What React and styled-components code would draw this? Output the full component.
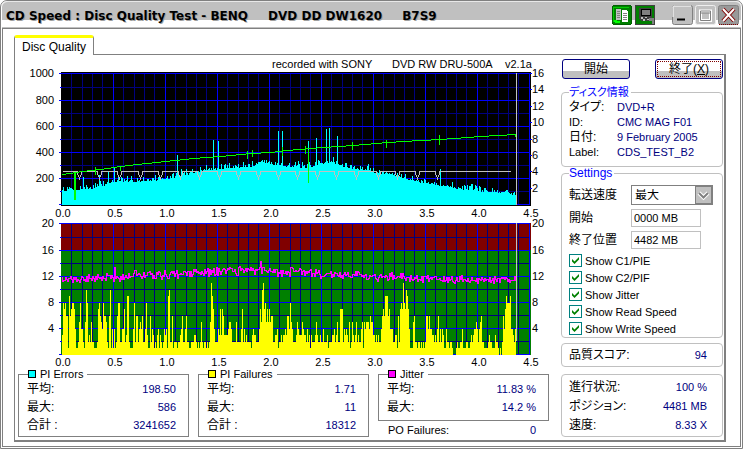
import React from "react";
import styled, { createGlobalStyle } from "styled-components";

const GlobalStyle = createGlobalStyle`
  * { box-sizing: border-box; }
  body {
    margin: 0;
    background: #fff;
    color: #000;
    font: 11px/12px "Liberation Sans", "Noto Sans CJK JP", sans-serif;
    font-feature-settings: "palt";
  }
  button, input, select { font: inherit; color: inherit; }
`;

const GRAY = "#808080";
const SILVER = "#c0c0c0";
const NAVY = "#000080";

const Window = styled.main`
  border: 1px solid ${GRAY};
  border-radius: 7px 7px 0 0;
  padding: 0 1px 1px;
  background: #fff;
`;

const TitleBar = styled.header`
  display: flex;
  align-items: center;
  height: 27px;
  padding: 1px 2px 0 4px;
  border-top: 1px solid #e8e8e8;
  border-bottom: 1px solid ${SILVER};
  border-radius: 6px 6px 0 0;
  background: linear-gradient(${SILVER} 18px, #fff 18px);
`;

const Title = styled.h1`
  display: flex;
  gap: 20px;
  flex: 1;
  margin: 0;
  padding-top: 2px;
  font: bold 12px/18px "DejaVu Sans", sans-serif;
  white-space: nowrap;
  text-shadow: 1px 1px #a0a0a0;
`;

const WindowButtons = styled.div`
  display: flex;
  gap: 2px;
`;

const ToolButtons = styled.div`
  display: flex;
  gap: 3px;
  margin-right: 17px;
`;

const IconButton = styled.button`
  display: block;
  width: ${(p) => (p.$tool ? 20 : 21)}px;
  height: 20px;
  padding: 0;
  border: 0;
  background: none;
  svg { display: block; }
`;

const Frame = styled.div`
  border: 1px solid ${GRAY};
  padding: 6px 14px 4px 11px;
`;

const Tab = styled.button`
  display: block;
  position: relative;
  height: 20px;
  margin-bottom: -1px;
  padding: 0 7px;
  border: 1px solid ${GRAY};
  border-top: 3px solid #ff0;
  border-bottom: 0;
  border-radius: 3px 3px 0 0;
  background: #fff;
  font-size: 12px;
`;

const Panel = styled.section`
  display: grid;
  grid-template-columns: minmax(0, 1fr) 163px;
  gap: 12px;
  padding: 1px 0 1px 3px;
  border: 1px solid ${GRAY};
  border-right-width: 2px;
  border-bottom-width: 2px;
`;

const Chart = styled.svg`
  display: block;
  width: 100%;
  height: auto;
  text { font-size: 11px; }
`;

const Stats = styled.div`
  display: grid;
  grid-template-columns: repeat(3, 1fr);
  align-items: start;
  gap: 9px;
`;

const StatBox = styled.fieldset`
  min-width: 0;
  margin: 0;
  padding: 0 12px ${(p) => p.$bottom}px 8px;
  border: 1px solid ${GRAY};
`;

const StatLegend = styled.legend`
  display: flex;
  align-items: center;
  gap: 4px;
  height: 12px;
  margin-left: 1px;
  padding: 0 4px 0 0;
`;

const Swatch = styled.span`
  width: 8px;
  height: 8px;
  border: 1px solid #000;
  background: ${(p) => p.$color};
`;

const Rows = styled.dl`
  margin: 0;
  padding: ${(p) => p.$pad || "0"};
`;

const Row = styled.div`
  display: flex;
  justify-content: space-between;
  align-items: center;
  height: ${(p) => p.$h || 18}px;
`;

const Label = styled.dt`
  font-size: ${(p) => (p.$latin ? 11 : 12)}px;
  white-space: nowrap;
`;

const Value = styled.dd`
  margin: 0;
  color: ${NAVY};
  white-space: nowrap;
`;

const InfoRow = styled(Row)`
  display: grid;
  grid-template-columns: 48px 1fr;
  height: 15px;
`;

const Side = styled.aside`
  display: flex;
  flex-direction: column;
  padding: 3px 1px 0 0;
`;

const Actions = styled.div`
  display: flex;
  justify-content: space-between;
  margin: 0 0 7px 1px;
`;

const PushButton = styled.button`
  width: 68px;
  height: 20px;
  padding: 0;
  border: 1px solid ${NAVY};
  border-radius: 3px;
  background: linear-gradient(#fff 11px, ${SILVER} 11px);
  font-size: 12px;
  outline: ${(p) => (p.$focused ? "1px dotted #800000" : "none")};
  outline-offset: -3px;
`;

const SideBox = styled.fieldset`
  min-width: 0;
  margin: 0;
  padding: 0 15px 0 7px;
  border: 1px solid ${SILVER};
  border-radius: 4px;
`;

const SideLegend = styled.legend`
  height: 12px;
  padding: 0 2px 0 0;
  font-size: ${(p) => (p.$latin ? 12 : 11)}px;
  color: #00f;
`;

const SummaryBox = styled.section`
  margin-top: ${(p) => p.$gap}px;
  padding: ${(p) => p.$pad}px 15px ${(p) => p.$pad}px 7px;
  border: 1px solid ${SILVER};
  border-radius: 4px;
`;

const Form = styled.div`
  display: grid;
  grid-template-columns: 62px 1fr;
  align-items: center;
  row-gap: 4px;
  margin: 6px -6px 3px 0;
`;

const FieldLabel = styled.label`
  font-size: 12px;
`;

const TextInput = styled.input`
  width: 70px;
  height: 18px;
  padding: 0 2px;
  border: 1px solid ${SILVER};
  background: #fff;
`;

const SelectWrap = styled.div`
  position: relative;
  height: 20px;
  svg {
    position: absolute;
    right: 1px;
    top: 1px;
    pointer-events: none;
  }
`;

const Select = styled.select`
  display: block;
  appearance: none;
  width: 100%;
  height: 20px;
  padding: 0 3px;
  border: 1px solid ${GRAY};
  border-radius: 0;
  background: #fff;
  font-size: 12px;
`;

const CheckRow = styled.label`
  display: flex;
  align-items: center;
  gap: 3px;
  height: 17px;
  white-space: nowrap;
`;

const Check = styled.input`
  appearance: none;
  width: 13px;
  height: 13px;
  margin: 0;
  border: 1px solid #008080;
  background: #fff;
  display: grid;
  place-content: center;
  &:checked::before {
    content: "";
    width: 7px;
    height: 7px;
    background: #008000;
    clip-path: polygon(0 28%, 36% 64%, 100% 0, 100% 36%, 36% 100%, 0 64%);
  }
`;

/* ---------- chart data, in plot pixels: one column per sample ---------- */

const LEFT = 43;
const PLOT_W = 470;
const SAMPLES = 454;

function random(seed) {
  let s = seed;
  return () => {
    s = (s * 1664525 + 1013904223) % 4294967296;
    return s / 4294967296;
  };
}

function at(points, x) {
  for (let i = 1; i < points.length; i++) {
    const [x0, y0] = points[i - 1];
    const [x1, y1] = points[i];
    if (x <= x1) return y0 + ((y1 - y0) * (x - x0)) / (x1 - x0);
  }
  return points[points.length - 1][1];
}

const PI_ENVELOPE = [
  [0, 108], [8, 115], [18, 122], [30, 128], [38, 145], [46, 165], [58, 185], [72, 180],
  [92, 192], [108, 207], [118, 230], [136, 250], [142, 272], [158, 275], [174, 292],
  [192, 298], [200, 335], [212, 310], [228, 298], [247, 282], [258, 320], [268, 330],
  [278, 305], [288, 285], [306, 268], [315, 248], [328, 240], [341, 213], [354, 182],
  [364, 168], [378, 153], [392, 128], [408, 120], [420, 108], [440, 100], [454, 80],
];
const PI_SPIKES = {
  21: 212, 37: 228, 46: 250, 52: 290, 115: 378, 119: 272, 151: 495, 156: 486, 216: 563,
  220: 563, 246: 486, 254: 510, 264: 578, 267: 586, 275: 525, 378: 272,
};
const SPEED = [
  [0, 119], [20, 116], [38, 114], [58, 111], [75, 109], [103, 106], [131, 103], [158, 101],
  [188, 98], [208, 97], [224, 95], [261, 92], [291, 90], [325, 87], [358, 85], [378, 84],
  [418, 81], [453, 79],
];
const SPEED_MARKS = [
  [12, 116, 28], [13, 116, 28], [33, 111, 8], [58, 110, 5], [185, 95, 8], [190, 94, 7],
  [220, 91, 9], [243, 90, 8], [246, 94, 33], [290, 86, 8], [324, 84, 8], [377, 79, 10], [453, 78, 3],
];
const NOTCHES = [
  17, 37, 57, 78, 98, 118, 137, 157, 176, 196, 216, 235, 255, 274, 294, 316, 335, 355, 375,
];

const PIF = (
  "38786619678874112584421" + "5a8232522111278654866521" + "6a14141268822447239921" +
  "1148266245462248311624312134132124341" + "9a226122212234622462211222332121252122121" +
  "25b9742224373763333455422225222247242322221343322247" + "5ab785757566223341223233436648" +
  "5422235433354332423132223532232242223122233423522777243432512532352322451545554" +
  "655332323224676999674442233162787b87a97411156221221212126646443323246242431142212" +
  "2100012112241112211232344542456221111232211132210102647988894432443"
).split("").map((c) => parseInt(c, 16));

const JITTER = [
  [0, 11.8], [20, 11.7], [40, 12.1], [58, 12.0], [70, 12.5], [98, 12.4], [125, 12.6],
  [158, 13.0], [180, 13], [198, 13.2], [224, 12.8], [235, 13.1], [260, 12.5], [285, 12.5],
  [305, 12.1], [335, 12], [360, 11.8], [386, 11.7], [420, 11.5], [435, 11.6], [440, 12.1], [453, 11.4],
];

const rndPi = random(7);
const piPath = Array.from({ length: SAMPLES }, (_, i) => {
  const v = PI_SPIKES[i] || at(PI_ENVELOPE, i) + rndPi() * rndPi() * 60 - 8;
  const h = Math.round(v * 0.131);
  return `M${LEFT + 1 + i} ${149 - h}h1v${h}h-1z`;
}).join("");

const pifPath = Array.from({ length: SAMPLES }, (_, i) => {
  const h = Math.round((PIF[i] ?? 2) * 6.5);
  return `M${LEFT + 1 + i} ${137 - h}h1v${h}h-1z`;
}).join("");

const rndJitter = random(21);
let previous = 59;
const jitterPath = Array.from({ length: SAMPLES }, (_, i) => {
  const peak = i === 52 ? 1.2 : i === 198 ? 1.1 : 0;
  const y = Math.round(137 - 6.5 * (at(JITTER, i) + peak + (rndJitter() + rndJitter() - 1) * 0.8));
  const top = Math.min(y, previous);
  const h = Math.abs(y - previous) + 1;
  previous = y;
  return `M${LEFT + 1 + i} ${top}h1v${h}h-1z`;
}).join("");

const speedPath = Array.from({ length: SAMPLES }, (_, i) =>
  `M${LEFT + 1 + i} ${Math.round(at(SPEED, i)) - 1}h1v1h-1z`
).join("") + SPEED_MARKS.map(([x, y, h]) => `M${LEFT + 1 + x} ${y}h1v${h}h-1z`).join("");

const writePath = "M45 115.5" + NOTCHES.map((n) => {
  const x = LEFT + 1 + n + 0.5;
  return `H${x - 2}V118L${x} 122.5L${x + 2} 118V115.5`;
}).join("") + "H493";

const X_LABELS = ["0.0", "0.5", "1.0", "1.5", "2.0", "2.5", "3.0", "3.5", "4.0", "4.5"];

function Grid({ top, bottom, rows }) {
  const vertical = [];
  for (let k = 1; k <= 45; k++) if (k % 5) vertical.push(Math.floor(LEFT + 10.4 * k + 0.3));
  return (
    <g>
      {vertical.map((x) => <rect key={x} x={x} y={top} width="1" height={bottom - top} fill={NAVY} />)}
      {rows.slice(1).map((y) => (
        <g key={y} fill={NAVY}>
          <rect x={LEFT} y={y - 13} width={PLOT_W - 2} height="1" />
          <rect x={LEFT - 1} y={y - 13} width="2" height="1" fill="#00f" />
        </g>
      ))}
      {X_LABELS.slice(1).map((l, i) => (
        <rect key={l} x={LEFT + 52 * (i + 1)} y={top} width="1" height={bottom - top} fill="#00f" />
      ))}
      {rows.map((y) => <rect key={y} x={LEFT - 2} y={y} width={PLOT_W} height="1" fill="#00f" />)}
    </g>
  );
}

function XAxis({ y }) {
  return X_LABELS.map((l, i) => (
    <text key={l} x={LEFT + 2 + 52 * i} y={y} textAnchor="middle">{l}</text>
  ));
}

function ErrorChart() {
  const rows = [17, 44, 70, 96, 122, 148];
  return (
    <Chart viewBox="0 0 531 162" role="img" aria-label="PI Errors" shapeRendering="crispEdges">
      <text x="254" y="12">recorded with SONY</text>
      <text x="374" y="12">DVD RW DRU-500A</text>
      <text x="487" y="12">v2.1a</text>
      <rect x={LEFT} y="16" width={PLOT_W} height="134" />
      <Grid top={17} bottom={149} rows={rows} />
      <path d={piPath} fill="#0ff" />
      <path d={writePath} fill="none" stroke={SILVER} />
      <path d={speedPath} fill="#0f0" />
      <rect x="498" y="17" width="1" height="132" fill={SILVER} />
      {["1000", "800", "600", "400", "200"].map((l, i) => (
        <text key={l} x="36" y={rows[i] + 4} textAnchor="end">{l}</text>
      ))}
      {[16, 14, 12, 10, 8, 6, 4, 2].map((l, i) => {
        const y = Math.round(17 + 16.4 * i);
        return (
          <g key={l}>
            <rect x="511" y={y} width="3" height="1" fill="#00f" />
            <text x="514" y={y + 4}>{l}</text>
          </g>
        );
      })}
      <XAxis y={161} />
    </Chart>
  );
}

function FailureChart() {
  const rows = [5, 32, 58, 84, 110, 136];
  const labels = ["20", "16", "12", "8", "4"];
  return (
    <Chart viewBox="0 0 531 150" role="img" aria-label="PI Failures / Jitter" shapeRendering="crispEdges">
      <rect x={LEFT} y="5" width={PLOT_W} height="27" fill="#800000" />
      <rect x={LEFT} y="32" width={PLOT_W} height="105" fill="#008000" />
      <Grid top={5} bottom={137} rows={rows} />
      <path d={pifPath} fill="#ff0" />
      <path d={jitterPath} fill="#f0f" />
      <rect x="498" y="5" width="1" height="118" fill={SILVER} />
      {labels.map((l, i) => (
        <g key={l}>
          <text x="36" y={rows[i] + 4} textAnchor="end">{l}</text>
          <text x="514" y={rows[i] + 4}>{l}</text>
        </g>
      ))}
      <XAxis y={148} />
    </Chart>
  );
}

function Stat({ title, color, rows, bottom = 2 }) {
  return (
    <StatBox $bottom={bottom}>
      <StatLegend><Swatch $color={color} />{title}</StatLegend>
      <Rows>
        {rows.map(([label, value]) => (
          <Row key={label}><Label>{label}</Label><Value>{value}</Value></Row>
        ))}
      </Rows>
    </StatBox>
  );
}

function TitleIcons() {
  return (
    <>
      <ToolButtons>
        <IconButton $tool aria-label="Copy">
          <svg width="20" height="20" shapeRendering="crispEdges">
            <rect x=".5" y=".5" width="19" height="19" rx="2" fill="#008000" stroke="#006000" />
            <path d="M1 17V2h16" fill="none" stroke="#0c0" />
            <path d="M2 15h3v1h3v2h-5z" fill="#0f0" />
            <path d="M4 4h5v11h-5z" fill={SILVER} />
            <path d="M10 5h4l2 2v10h-6z" fill="#fff" />
            <path d="M5 6h3M5 8h3M5 10h3M5 12h3M11 8h4M11 10h4M11 12h4M11 14h4" stroke={GRAY} />
          </svg>
        </IconButton>
        <IconButton $tool aria-label="Save">
          <svg width="20" height="20" shapeRendering="crispEdges">
            <rect x=".5" y=".5" width="19" height="19" fill="#008000" stroke="#404040" />
            <path d="M4 3h13v13H6l-2-2z" fill="#404040" />
            <path d="M6 4h9v6H6z" fill={GRAY} stroke="#000" />
            <path d="M6 12h2v2H6zM10 12h2v1h-2zM8 14h2v2H8zM12 14h2v1h-2z" fill={SILVER} />
            <path d="M14 13h5v6h-2v-3h-3z" fill={GRAY} />
          </svg>
        </IconButton>
      </ToolButtons>
      <WindowButtons>
        <IconButton aria-label="Minimize">
          <svg width="21" height="20">
            <rect x=".5" y=".5" width="20" height="19" rx="2" fill={SILVER} stroke={GRAY} />
            <path d="M1 12V2a1 1 0 0 1 1-1h17" fill="none" stroke="#fff" />
            <path d="M5 14.5h8" stroke="#000" strokeWidth="2" />
          </svg>
        </IconButton>
        <IconButton aria-label="Maximize">
          <svg width="21" height="20">
            <rect x=".5" y=".5" width="20" height="19" rx="2" fill={SILVER} stroke="#eee" />
            <path d="M5.500 6h10v9.500h-10z" fill={SILVER} stroke="#fff" strokeWidth="3" />
            <path d="M5.500 6h10v9.500h-10zM5.500 8h10" fill="none" stroke={GRAY} />
          </svg>
        </IconButton>
        <IconButton aria-label="Close">
          <svg width="21" height="20">
            <rect x=".5" y=".5" width="20" height="19" rx="2" fill="#999" stroke={GRAY} />
            <path d="M1 19.500h19" stroke="#800000" strokeDasharray="1 1" />
            <path d="M5 4l11 12M16 4L5 16" stroke="#800000" strokeWidth="4" />
            <path d="M5 4l11 12M16 4L5 16" stroke="#fff" strokeWidth="2" />
          </svg>
        </IconButton>
      </WindowButtons>
    </>
  );
}

const CHECKS = ["Show C1/PIE", "Show C2/PIF", "Show Jitter", "Show Read Speed", "Show Write Speed"];
const INFO = [
  ["タイプ:", "DVD+R"],
  ["ID:", "CMC MAG F01"],
  ["日付:", "9 February 2005"],
  ["Label:", "CDS_TEST_B2"],
];
const PROGRESS = [["進行状況:", "100 %"], ["ポジション:", "4481 MB"], ["速度:", "8.33 X"]];

export default function App() {
  return (
    <>
      <GlobalStyle />
      <Window>
        <TitleBar>
          <Title>
            <span>CD Speed : Disc Quality Test - BENQ</span>
            <span>DVD DD DW1620</span>
            <span>B7S9</span>
          </Title>
          <TitleIcons />
        </TitleBar>
        <Frame>
          <Tab>Disc Quality</Tab>
          <Panel>
            <div>
              <ErrorChart />
              <FailureChart />
              <Stats>
                <Stat title="PI Errors" color="#0ff" rows={[["平均:", "198.50"], ["最大:", "586"], ["合計 :", "3241652"]]} />
                <Stat title="PI Failures" color="#ff0" rows={[["平均:", "1.71"], ["最大:", "11"], ["合計 :", "18312"]]} />
                <div>
                  <Stat title="Jitter" color="#f0f" bottom={4} rows={[["平均:", "11.83 %"], ["最大:", "14.2 %"]]} />
                  <Rows $pad="0 13px 0 10px">
                    <Row><Label $latin>PO Failures:</Label><Value>0</Value></Row>
                  </Rows>
                </div>
              </Stats>
            </div>
            <Side>
              <Actions>
                <PushButton>開始</PushButton>
                <PushButton $focused>終了(<u>X</u>)</PushButton>
              </Actions>
              <SideBox>
                <SideLegend>ディスク情報</SideLegend>
                <Rows $pad="1px 0 7px">
                  {INFO.map(([label, value]) => (
                    <InfoRow key={label}>
                      <Label $latin={/^\w/.test(label)}>{label}</Label>
                      <Value>{value}</Value>
                    </InfoRow>
                  ))}
                </Rows>
              </SideBox>
              <SideBox>
                <SideLegend $latin>Settings</SideLegend>
                <Form>
                  <FieldLabel htmlFor="speed">転送速度</FieldLabel>
                  <SelectWrap>
                    <Select id="speed"><option>最大</option></Select>
                    <svg width="17" height="18">
                      <rect x=".5" y=".5" width="16" height="17" fill={SILVER} stroke={GRAY} />
                      <path d="M4 7l4.500 4.500L13 7" fill="none" stroke="#fff" strokeWidth="4" />
                      <path d="M4 7l4.500 4.500L13 7" fill="none" stroke={GRAY} strokeWidth="2" />
                    </svg>
                  </SelectWrap>
                  <FieldLabel htmlFor="start">開始</FieldLabel>
                  <TextInput id="start" defaultValue="0000 MB" />
                  <FieldLabel htmlFor="end">終了位置</FieldLabel>
                  <TextInput id="end" defaultValue="4482 MB" />
                </Form>
                {CHECKS.map((c) => (
                  <CheckRow key={c}><Check type="checkbox" defaultChecked />{c}</CheckRow>
                ))}
              </SideBox>
              <SummaryBox $gap={5} $pad={2}>
                <Rows><Row><Label>品質スコア:</Label><Value>94</Value></Row></Rows>
              </SummaryBox>
              <SummaryBox $gap={7} $pad={2}>
                <Rows>
                  {PROGRESS.map(([label, value]) => (
                    <Row $h={19} key={label}><Label>{label}</Label><Value>{value}</Value></Row>
                  ))}
                </Rows>
              </SummaryBox>
            </Side>
          </Panel>
        </Frame>
      </Window>
    </>
  );
}
